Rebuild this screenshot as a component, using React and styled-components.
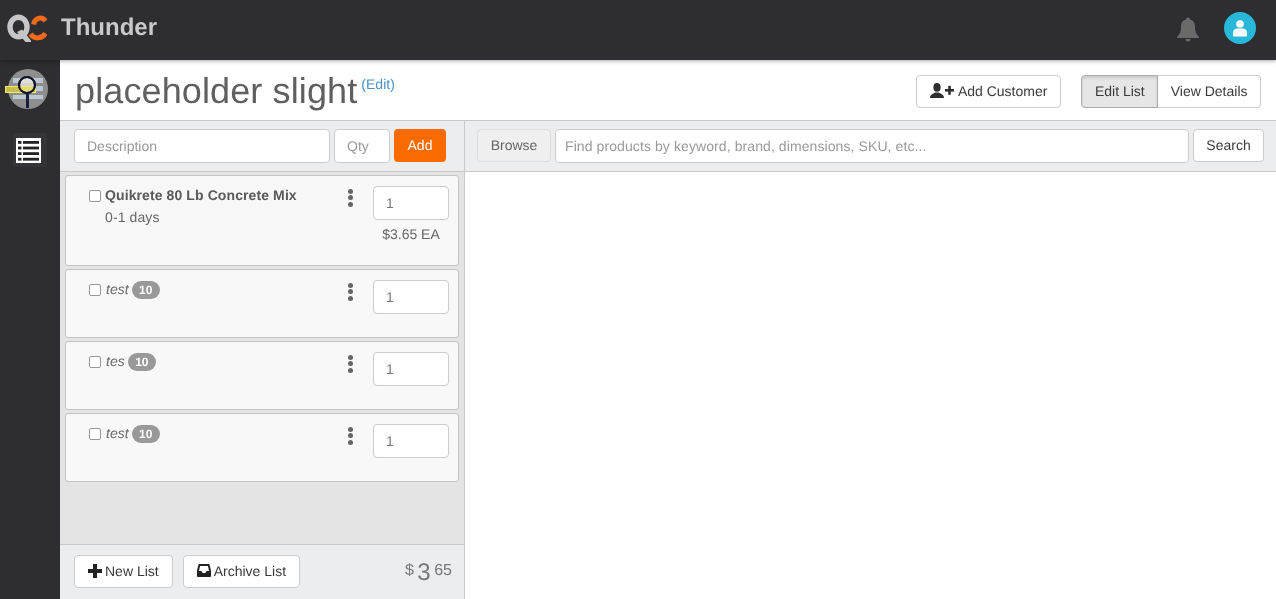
import React from 'react';
import styled, { createGlobalStyle } from 'styled-components';

const Global = createGlobalStyle`
  html, body { margin: 0; padding: 0; height: 100%; overflow: hidden; }
  body { font-family: "Liberation Sans", Arial, sans-serif; font-size: 14px; color: #555; background: #fff; }
  * { box-sizing: border-box; text-rendering: geometricPrecision; }
  input::placeholder { color: #999; opacity: 1; }
`;

const Page = styled.div`width: 1276px; height: 599px; display: flex; flex-direction: column; overflow: hidden; will-change: transform;`;
const TopBar = styled.header`
  height: 60px; flex: none; background: #2d2d32; display: flex; align-items: center;
  padding: 0 20px 5px 7px; position: relative; z-index: 2; box-shadow: 0 1px 4px rgba(0,0,0,.35);
`;
const LogoSvg = styled.svg`display: block; margin-top: 1px; flex: none;`;
const Brand = styled.div`font-size: 24px; font-weight: 700; color: #c9c9c9; margin-left: 14px;`;
const TopRight = styled.div`margin-left: auto; display: flex; align-items: center; gap: 25px; padding-top: 1px;`;
const BellSvg = styled.svg`display: block; margin-top: 3px;`;
const Avatar = styled.div`
  width: 32px; height: 32px; border-radius: 50%; background: #29b8da;
  display: flex; align-items: center; justify-content: center;
`;
const Body = styled.div`flex: 1; display: flex; min-height: 0;`;
const SideBar = styled.nav`
  width: 60px; flex: none; background: #2d2d32; display: flex; flex-direction: column; align-items: flex-start;
  padding: 9px 0 0 5px;
`;
const SideIconBox = styled.div`
  width: 34px; height: 34px; margin: 24px 0 0 8px; padding-right: 3px; background: #333338;
  display: flex; align-items: center; justify-content: center;
`;
const Main = styled.main`flex: 1; display: flex; flex-direction: column; min-width: 0;`;
const TitleRow = styled.div`
  height: 61px; flex: none; display: flex; align-items: flex-start; padding: 0 15px; border-bottom: 1px solid #c8c8c8; background: #fff;
`;
const Title = styled.h1`margin: 9px 0 0; font-size: 36px; font-weight: 400; line-height: 44px; color: #5f5f5f; letter-spacing: .12px;`;
const EditLink = styled.a`color: #4a90c8; font-size: 14px; margin: 17px 0 0 4px; line-height: 15px;`;
const TitleActions = styled.div`margin-left: auto; display: flex; gap: 20px; padding-top: 15px;`;
const Btn = styled.button`
  height: 33px; padding: 0 13px 2px; border: 1px solid #ccc; border-radius: 4px; background: ${p => p.$active ? '#e6e6e6' : '#fff'};
  font: 14px "Liberation Sans", Arial, sans-serif; color: #3a3a3a; display: inline-flex; align-items: center; gap: ${p => p.$gap || 3}px; white-space: nowrap;
`;
const BtnGroup = styled.div`display: flex;`;
const GroupBtn = styled(Btn)`
  padding: 0 12.5px 2px;
  ${p => p.$active ? 'border-radius: 4px 0 0 4px; box-shadow: inset 0 2px 3px rgba(0,0,0,.13); border-color: #adadad;' : 'border-radius: 0 4px 4px 0; border-left: 0;'}
`;
const Columns = styled.div`flex: 1; display: flex; min-height: 0;`;
const LeftPane = styled.section`width: 405px; flex: none; display: flex; flex-direction: column; border-right: 1px solid #c8c8c8;`;
const RightPane = styled.section`flex: 1; display: flex; flex-direction: column; min-width: 0;`;
const Toolbar = styled.div`
  height: 51px; flex: none; background: #ecedef; border-bottom: 1px solid #c8c8c8; display: flex; gap: 4px; padding: 8px 0 0 14px;
`;
const RightToolbar = styled(Toolbar)`padding-left: 12px; padding-right: 12px;`;
const TextInput = styled.input`
  height: 34px; border: 1px solid #ccc; border-radius: 4px; background: #fff; padding: 0 12px; font: 14px "Liberation Sans", Arial, sans-serif; color: #777; outline: none; min-width: 0;
  width: ${p => p.$w || 'auto'}; ${p => p.$grow ? 'flex: 1; padding-left: 9px; letter-spacing: .09px;' : ''}
`;
const AddBtn = styled.button`
  width: 52px; height: 33px; border: 0; border-radius: 4px; background: #f96b00; color: #fff; font: 14px "Liberation Sans", Arial, sans-serif; padding: 0 0 2px;
`;
const BrowseBtn = styled(Btn)`width: 74px; background: #f0f0f0; border-color: #ddd; justify-content: center; color: #666; padding: 0 0 2px;`;
const SearchBtn = styled(Btn)`width: 71px; justify-content: center; padding: 0 0 2px;`;
const List = styled.div`flex: 1; background: #e4e4e4; padding: 3px 5px 0; display: flex; flex-direction: column; gap: 3px; min-height: 0; border-bottom: 1px solid #c8c8c8;`;
const Card = styled.article`
  height: ${p => p.$h}px; flex: none; background: #f8f8f8; border: 1px solid #c4c4c4; border-radius: 3px; display: flex; padding: 10px 9px 0 23px;
`;
const Check = styled.input.attrs({ type: 'checkbox' })`
  appearance: none; width: 12px; height: 12px; margin: 4px 4px 0 0; flex: none; background: #fff; border: 1px solid #999; border-radius: 2px;
`;
const CardText = styled.div`flex: 1; min-width: 0; line-height: 20px; margin-top: -1px;`;
const ItemName = styled.div`font-weight: 700; color: #5a5a5a; letter-spacing: .1px;`;
const ItemMeta = styled.div`color: #666; margin-top: 2px; letter-spacing: .1px;`;
const ItemNote = styled.div`display: flex; align-items: flex-start; gap: 3px; font-style: italic; color: #6b6b6b; padding-left: 1px;`;
const Pill = styled.span`
  background: #999; color: #fff; font-style: normal; font-weight: 700; font-size: 12px; line-height: 18px; height: 18px; padding: 0 7.5px; border-radius: 9px; margin-top: 2px;
`;
const Dots = styled.div`
  width: 6px; margin: 2.5px 19px 0 0; flex: none; display: flex; flex-direction: column; gap: 1.7px; align-self: flex-start;
`;
const Dot = styled.i`display: block; width: 5px; height: 5px; border-radius: 50%; background: #666;`;
const QtyCol = styled.div`width: 76px; flex: none; display: flex; flex-direction: column; align-items: center;`;
const QtyInput = styled(TextInput)`width: 76px; height: 34px; padding-left: 12px;`;
const Price = styled.div`margin-top: 6px; color: #666; line-height: 17px;`;
const Footer = styled.div`
  height: 54px; flex: none; background: #ecedef; display: flex; gap: 10px; padding: 10px 12px 0 14px;
`;
const Total = styled.div`margin-left: auto; display: flex; align-items: flex-start; color: #777; font-size: 16px; padding-top: 7px; gap: 3.5px; line-height: 18px;`;
const Big = styled.span`font-size: 24px; line-height: 28px; margin-top: -3px;`;
const Canvas = styled.div`flex: 1; background: #fff;`;

const LogoMark = () => (
  <LogoSvg width="40" height="30" viewBox="0 0 40 30" aria-hidden="true">
    <ellipse cx="11.5" cy="14" rx="8.5" ry="9.8" fill="none" stroke="#c6c6c6" strokeWidth="5.4" />
    <path d="M10 19 L15 16.5 L24 27.5 L24 29 L18.5 29 Z" fill="#c6c6c6" />
    <path d="M26.5 11.5 C27.5 5.5 34.5 2.5 38.5 8" fill="none" stroke="#f4691a" strokeWidth="5" />
    <path d="M23.5 21 C27.5 26.5 34.5 26 38.5 20.5" fill="none" stroke="#f4691a" strokeWidth="5" />
  </LogoSvg>
);

const SearchLogo = () => (
  <svg width="46" height="40" viewBox="0 0 46 40" aria-hidden="true" style={{ display: 'block' }}>
    <circle cx="23" cy="20" r="20" fill="#8e8e8e" />
    <rect x="8" y="9" width="30" height="5" fill="#bcc7d4" />
    <rect x="8" y="26" width="30" height="4" fill="#bcc7d4" />
    <rect x="22" y="17" width="16" height="5" fill="#bcc7d4" />
    <rect x="0.5" y="17.5" width="30" height="6" fill="#c9bd4c" stroke="#f2e86a" />
    <circle cx="22" cy="16" r="8" fill="#eceadf" fillOpacity=".75" stroke="#101528" strokeWidth="2" />
    <rect x="15" y="17.5" width="13" height="4" fill="#e6dc64" />
    <circle cx="22" cy="16" r="8" fill="none" stroke="#101528" strokeWidth="2" />
    <rect x="21" y="24" width="3" height="15" fill="#16203c" />
  </svg>
);

const ListGlyph = () => (
  <svg width="25" height="25" viewBox="0 0 25 25" aria-hidden="true">
    <rect width="25" height="25" fill="#fff" />
    <g fill="#222">
      <rect x="2" y="3" width="3.5" height="2.8" /><rect x="7" y="3" width="16" height="2.8" />
      <rect x="2" y="8.6" width="3.5" height="2.8" /><rect x="7" y="8.6" width="16" height="2.8" />
      <rect x="2" y="14.2" width="3.5" height="2.8" /><rect x="7" y="14.2" width="16" height="2.8" />
      <rect x="2" y="19.8" width="3.5" height="2.8" /><rect x="7" y="19.8" width="16" height="2.8" />
    </g>
  </svg>
);

const BellIcon = () => (
  <BellSvg width="22" height="25" viewBox="0 0 22 25" aria-hidden="true">
    <path fill="#6a6a6a" d="M11 .5C12.3.5 13 1.3 13 2.6C16.5 3.6 18 6.5 18 10C18 14.5 19 17 22 20L22 21L0 21L0 20C3 17 4 14.5 4 10C4 6.5 5.5 3.6 9 2.6C9 1.3 9.7.5 11 .5Z" />
    <path fill="#6a6a6a" d="M8.5 22a2.5 2.5 0 0 0 5 0Z" />
  </BellSvg>
);

const AvatarIcon = () => (
  <svg width="16" height="17" viewBox="0 0 16 17" aria-hidden="true">
    <circle cx="8" cy="4" r="3.8" fill="#fff" />
    <path fill="#fff" d="M1 15.5V12.5C1 10.3 3 8.6 5 8.6H11C13 8.6 15 10.3 15 12.5V15.5Q15 16.5 14 16.5H2Q1 16.5 1 15.5Z" />
  </svg>
);

const UserPlusIcon = () => (
  <svg width="24" height="15" viewBox="0 0 24 15" aria-hidden="true">
    <g fill="#2e2e2e">
      <ellipse cx="7" cy="4.4" rx="3.6" ry="4.4" />
      <path d="M0 15C0 11.5 3 11 5.2 9.5L8.8 9.5C11 11 14 11.5 14 15Z" />
      <rect x="15" y="6" width="9" height="2.6" />
      <rect x="18.2" y="2.8" width="2.6" height="9" />
    </g>
  </svg>
);

const PlusIcon = () => (
  <svg width="14" height="14" viewBox="0 0 14 14" aria-hidden="true">
    <g fill="#222"><rect x="0" y="5" width="14" height="4" /><rect x="5" y="0" width="4" height="14" /></g>
  </svg>
);

const InboxIcon = () => (
  <svg width="14" height="13" viewBox="0 0 14 13" aria-hidden="true">
    <path fill="#222" d="M2.5 0H11.5Q12.3 0 12.7 1L14 7V12Q14 13 13 13H1Q0 13 0 12V7L1.3 1Q1.7 0 2.5 0Z" />
    <path fill="#fff" d="M3 2H11L12 7H9.5L8.5 9H5.5L4.5 7H2Z" />
  </svg>
);

const items = [
  { key: 'a', h: 91, name: 'Quikrete 80 Lb Concrete Mix', meta: '0-1 days', price: '$3.65 EA' },
  { key: 'b', h: 69, note: 'test' },
  { key: 'c', h: 69, note: 'tes' },
  { key: 'd', h: 69, note: 'test' },
];

export default function App() {
  return (
    <Page>
      <Global />
      <TopBar>
        <LogoMark />
        <Brand>Thunder</Brand>
        <TopRight>
          <BellIcon />
          <Avatar><AvatarIcon /></Avatar>
        </TopRight>
      </TopBar>
      <Body>
        <SideBar>
          <SearchLogo />
          <SideIconBox><ListGlyph /></SideIconBox>
        </SideBar>
        <Main>
          <TitleRow>
            <Title>placeholder slight</Title>
            <EditLink>(Edit)</EditLink>
            <TitleActions>
              <Btn $gap={4}><UserPlusIcon />Add Customer</Btn>
              <BtnGroup>
                <GroupBtn $active>Edit List</GroupBtn>
                <GroupBtn>View Details</GroupBtn>
              </BtnGroup>
            </TitleActions>
          </TitleRow>
          <Columns>
            <LeftPane>
              <Toolbar>
                <TextInput placeholder="Description" $w="256px" />
                <TextInput placeholder="Qty" $w="56px" />
                <AddBtn>Add</AddBtn>
              </Toolbar>
              <List>
                {items.map(it => (
                  <Card key={it.key} $h={it.h}>
                    <Check />
                    <CardText>
                      {it.name ? (
                        <>
                          <ItemName>{it.name}</ItemName>
                          <ItemMeta>{it.meta}</ItemMeta>
                        </>
                      ) : (
                        <ItemNote>{it.note} <Pill>10</Pill></ItemNote>
                      )}
                    </CardText>
                    <Dots><Dot /><Dot /><Dot /></Dots>
                    <QtyCol>
                      <QtyInput defaultValue="1" />
                      {it.price && <Price>{it.price}</Price>}
                    </QtyCol>
                  </Card>
                ))}
              </List>
              <Footer>
                <Btn><PlusIcon />New List</Btn>
                <Btn><InboxIcon />Archive List</Btn>
                <Total><span>$</span><Big>3</Big><span>65</span></Total>
              </Footer>
            </LeftPane>
            <RightPane>
              <RightToolbar>
                <BrowseBtn>Browse</BrowseBtn>
                <TextInput $grow placeholder="Find products by keyword, brand, dimensions, SKU, etc..." />
                <SearchBtn>Search</SearchBtn>
              </RightToolbar>
              <Canvas />
            </RightPane>
          </Columns>
        </Main>
      </Body>
    </Page>
  );
}
